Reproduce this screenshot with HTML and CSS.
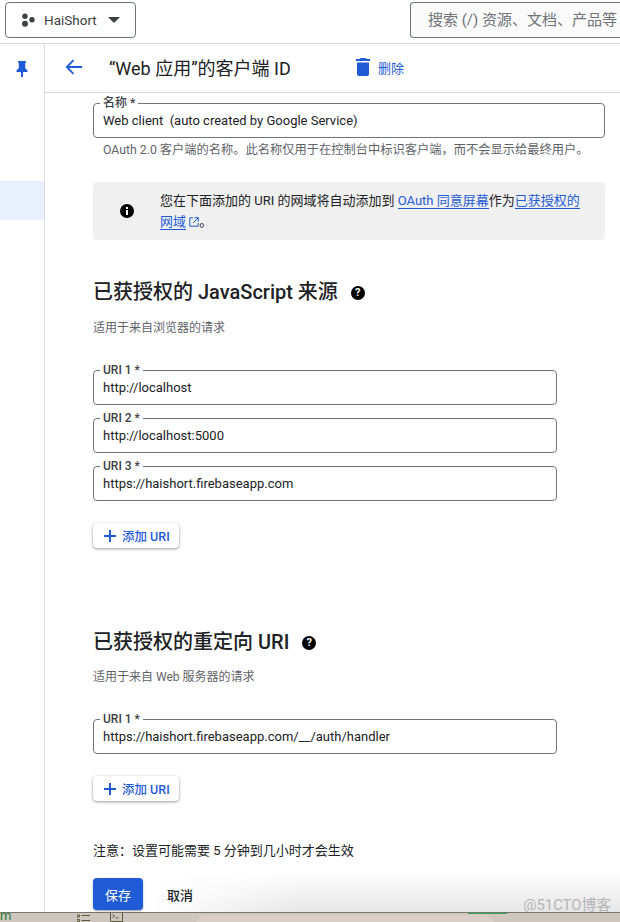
FILE: index.html
```html
<!DOCTYPE html>
<html lang="zh-CN">
<head>
    <meta charset="UTF-8">
    <meta name="viewport" content="width=device-width, initial-scale=1.0">
    <title>“Web 应用”的客户端 ID</title>
    <link rel="stylesheet" href="styles.css">
</head>
<body>
    <header class="topbar">
        <div class="project-picker">
            <svg class="project-dots" width="14" height="14" viewBox="0 0 14 14"><circle cx="4" cy="3.2" r="2.7"/><circle cx="11" cy="6.8" r="2.7"/><circle cx="4" cy="10.8" r="3"/></svg>
            <span>HaiShort</span>
            <span class="caret"></span>
        </div>
        <div class="search">搜索 (/) 资源、文档、产品等</div>
    </header>

    <div class="workspace">
        <nav class="rail">
            <div class="rail-pin">
                <svg width="14" height="17" viewBox="0 0 14 17"><path fill="#1f5bd6" d="M3 1h8v1.500l-.8.5v5l2.300 2.500V12H8v5H6v-5H1.500v-1.500L3.800 8V3L3 2.500z"/></svg>
            </div>
            <div class="rail-active"></div>
        </nav>

        <div class="content">
            <div class="titlebar">
                <svg class="back" width="18" height="16" viewBox="0 0 18 16"><path fill="none" stroke="#1f5bd6" stroke-width="1.800" d="M17 8H2M8.500 1.200 1.800 8l6.700 6.800"/></svg>
                <h1>“Web 应用”的客户端 ID</h1>
                <div class="delete">
                    <svg width="14" height="18" viewBox="0 0 14 18"><path fill="#1f5bd6" d="M4.500 0h5l1 1H14v2H0V1h3.500zM1 4.500h12V16a2 2 0 0 1-2 2H3a2 2 0 0 1-2-2z"/></svg>
                    <span>删除</span>
                </div>
            </div>

            <main class="form">
                <div class="field field-wide name-field">
                    <label>名称 *</label>
                    <div class="value">Web client&nbsp; (auto created by Google Service)</div>
                </div>
                <p class="hint">OAuth 2.0 客户端的名称。此名称仅用于在控制台中标识客户端，而不会显示给最终用户。</p>

                <div class="notice">
                    <svg class="notice-icon" width="14" height="14" viewBox="0 0 14 14"><circle cx="7" cy="7" r="7"/><rect x="6" y="6" width="2" height="5" fill="#fff"/><rect x="6" y="3" width="2" height="2" fill="#fff"/></svg>
                    <p>您在下面添加的 URI 的网域将自动添加到 <a href="#">OAuth 同意屏幕</a>作为<a href="#">已获授权的网域</a> <svg class="ext" width="10" height="10" viewBox="0 0 10 10"><path fill="none" stroke="#1f5bd6" d="M4 .800H.800v8.400h8.400V6M5.500.700h3.800v3.800M9.200.800 4 6"/></svg>。</p>
                </div>

                <section class="origins">
                    <h2>已获授权的 JavaScript 来源 <span class="help">?</span></h2>
                    <p class="sub">适用于来自浏览器的请求</p>
                    <div class="uri-list">
                        <div class="field"><label>URI 1 *</label><div class="value">http://localhost</div></div>
                        <div class="field"><label>URI 2 *</label><div class="value">http://localhost:5000</div></div>
                        <div class="field"><label>URI 3 *</label><div class="value">https://haishort.firebaseapp.com</div></div>
                    </div>
                    <button class="add-btn"><span class="plus"></span>添加 URI</button>
                </section>

                <section class="redirects">
                    <h2>已获授权的重定向 URI <span class="help">?</span></h2>
                    <p class="sub">适用于来自 Web 服务器的请求</p>
                    <div class="uri-list">
                        <div class="field"><label>URI 1 *</label><div class="value">https://haishort.firebaseapp.com/__/auth/handler</div></div>
                    </div>
                    <button class="add-btn"><span class="plus"></span>添加 URI</button>
                </section>

                <p class="note">注意：设置可能需要 5 分钟到几小时才会生效</p>
                <div class="actions">
                    <button class="save">保存</button>
                    <button class="cancel">取消</button>
                </div>
            </main>
        </div>
    </div>

    <div class="fade"></div>
    <div class="watermark">@51CTO博客</div>

    <footer class="dock">
        <span class="dock-m">m</span>
        <svg class="dock-list" width="13" height="8" viewBox="0 0 13 8"><path fill="none" stroke="#5a5a3c" d="M0 1h2.500v2H0zM0 5.500h2.500v2H0zM4.500 1.500H13M4.500 6.500H13"/></svg>
        <svg class="dock-term" width="13" height="9" viewBox="0 0 13 9"><path fill="none" stroke="#5a5a3c" d="M.500 0v8.500h12V0M2.500 1.500l2 1.500-2 1.500M5.500 5h3"/></svg>
        <span class="dock-tab"></span>
        <span class="dock-green"></span>
    </footer>
</body>
</html>
```

FILE: styles.css
```css
* {
    box-sizing: border-box;
}
html, body {
    margin: 0;
    height: 922px;
    overflow: hidden;
}
body {
    position: relative;
    display: flex;
    flex-direction: column;
    background-color: #fff;
    color: #202124;
    font-family: Roboto, 'Noto Sans CJK SC', sans-serif;
    font-size: 12px;
}
.topbar {
    height: 44px;
    flex: none;
    display: flex;
    justify-content: space-between;
    padding: 2px 0 0 5px;
    border-bottom: 1px solid #dadce0;
}
.project-picker {
    width: 131px;
    height: 36px;
    display: flex;
    align-items: center;
    padding-left: 15px;
    border: 1px solid #70757a;
    border-radius: 4px;
    font-size: 13.500px;
    color: #3c4043;
}
.project-dots {
    margin-right: 9px;
    fill: #3c4043;
}
.caret {
    margin-left: 11px;
    border-top: 6px solid #3c4043;
    border-left: 6px solid transparent;
    border-right: 6px solid transparent;
}
.search {
    width: 210px;
    height: 36px;
    padding: 0 0 0 17px;
    border: 1px solid #70757a;
    border-right: none;
    border-radius: 4px 0 0 4px;
    background-color: #fafafa;
    color: #6f7276;
    font-size: 15px;
    line-height: 34px;
    white-space: nowrap;
    overflow: hidden;
}
.workspace {
    flex: 1;
    min-height: 0;
    display: flex;
}
.rail {
    width: 45px;
    flex: none;
    border-right: 1px solid #dadce0;
}
.rail-pin {
    height: 49px;
    display: flex;
    align-items: center;
    justify-content: center;
    padding-bottom: 1px;
}
.rail-active {
    height: 39px;
    margin-top: 88px;
    background-color: #e8f0fe;
}
.content {
    flex: 1;
    min-width: 0;
}
.titlebar {
    height: 49px;
    display: flex;
    align-items: center;
    padding: 0 0 2px 20px;
    border-bottom: 1px solid #dadce0;
}
.back {
    flex: none;
}
.titlebar h1 {
    margin: 0 0 0 26px;
    width: 247px;
    font-size: 18px;
    font-weight: 400;
    color: #202124;
}
.delete {
    display: flex;
    align-items: center;
    gap: 8px;
    color: #1f5bd6;
    font-size: 13px;
}
.form {
    padding: 10px 15px 0 48px;
}
.field {
    position: relative;
    width: 464px;
    height: 35px;
    border: 1px solid #70757a;
    border-radius: 4px;
}
.field-wide {
    width: 512px;
}
.field label {
    position: absolute;
    top: -8px;
    left: 6px;
    padding: 0 3px;
    background-color: #fff;
    font-size: 12px;
    line-height: 15px;
    font-weight: 500;
    color: #3c4043;
}
.value {
    padding-left: 9px;
    font-size: 13px;
    line-height: 33px;
    color: #202124;
    white-space: nowrap;
}
.hint {
    margin: 4px 0 0;
    padding-left: 10px;
    color: #5f6368;
    font-size: 12.250px;
    line-height: 16px;
    white-space: nowrap;
}
.notice {
    width: 512px;
    height: 58px;
    margin-top: 24px;
    display: flex;
    align-items: center;
    padding: 0 20px 0 27px;
    border-radius: 4px;
    background-color: #f0f0f0;
}
.notice-icon {
    flex: none;
    fill: #000;
    margin-right: 26px;
}
.notice p {
    margin: 0;
    font-size: 13px;
    line-height: 21px;
    color: #202124;
}
.notice a {
    color: #1f5bd6;
    text-decoration: none;
    border-bottom: 1px solid #1f5bd6;
}
.ext {
    vertical-align: -1px;
}
h2 {
    margin: 0;
    font-size: 20px;
    line-height: 26px;
    font-weight: 500;
    color: #202124;
}
.help {
    display: inline-block;
    width: 14px;
    height: 14px;
    margin-left: 8px;
    border-radius: 50%;
    background-color: #000;
    color: #fff;
    font-size: 11px;
    line-height: 14px;
    font-weight: 700;
    text-align: center;
    vertical-align: 3px;
}
.origins {
    margin-top: 39px;
}
.redirects {
    margin-top: 81px;
}
.sub {
    margin: 15px 0 0;
    color: #5f6368;
    font-size: 12px;
    line-height: 16px;
}
.uri-list {
    margin-top: 34px;
    display: flex;
    flex-direction: column;
    gap: 13px;
}
.redirects .sub {
    margin-top: 14px;
}
.add-btn {
    display: flex;
    align-items: center;
    height: 25px;
    margin-top: 22px;
    padding: 0 9px 0 11px;
    border: none;
    border-radius: 4px;
    background-color: #fff;
    box-shadow: 0 1px 3px rgba(60, 64, 67, 0.55);
    color: #1f5bd6;
    font-family: inherit;
    font-size: 12.500px;
    font-weight: 500;
}
.plus {
    width: 12px;
    height: 12px;
    margin-right: 6px;
    background:
        linear-gradient(#1f5bd6, #1f5bd6) center / 12px 2px no-repeat,
        linear-gradient(#1f5bd6, #1f5bd6) center / 2px 12px no-repeat;
}
.note {
    margin: 41px 0 0;
    font-size: 13px;
    line-height: 18px;
    color: #202124;
}
.actions {
    position: relative;
    z-index: 1;
    margin-top: 18px;
    display: flex;
    align-items: center;
}
.actions button {
    height: 32px;
    border: none;
    border-radius: 4px;
    font-family: inherit;
    font-size: 13px;
}
.save {
    width: 50px;
    background-color: #1f5bd6;
    color: #fff;
    box-shadow: 0 1px 2px rgba(60, 64, 67, 0.5);
}
.cancel {
    width: 50px;
    margin-left: 12px;
    background-color: transparent;
    color: #202124;
    font-weight: 500;
}
.fade {
    position: absolute;
    left: 150px;
    right: 0;
    bottom: 10px;
    height: 40px;
    background: linear-gradient(rgba(225, 225, 225, 0), rgba(225, 225, 225, 0.85));
    -webkit-mask-image: linear-gradient(to right, transparent, #000 150px);
    mask-image: linear-gradient(to right, transparent, #000 150px);
    pointer-events: none;
}
.watermark {
    position: absolute;
    right: 9px;
    bottom: 8px;
    color: #b5b5b5;
    font-size: 14.800px;
    line-height: 18px;
}
.dock {
    position: relative;
    height: 10px;
    flex: none;
    overflow: hidden;
    border-top: 1px solid #77766c;
    background-color: #cfc6bf;
}
.dock-m {
    position: absolute;
    top: -4px;
    left: 0;
    color: #2a7d3a;
    font-size: 13px;
    line-height: 13px;
}
.dock-list {
    position: absolute;
    top: 1px;
    left: 77px;
}
.dock-term {
    position: absolute;
    top: 0;
    left: 110px;
}
.dock-tab {
    position: absolute;
    top: 2px;
    left: 195px;
    width: 300px;
    height: 20px;
    border-radius: 12px 12px 0 0;
    background-color: #d9cfc8;
}
.dock-green {
    position: absolute;
    top: 0;
    left: 468px;
    width: 39px;
    height: 1px;
    background-color: #2fa84f;
}
```
